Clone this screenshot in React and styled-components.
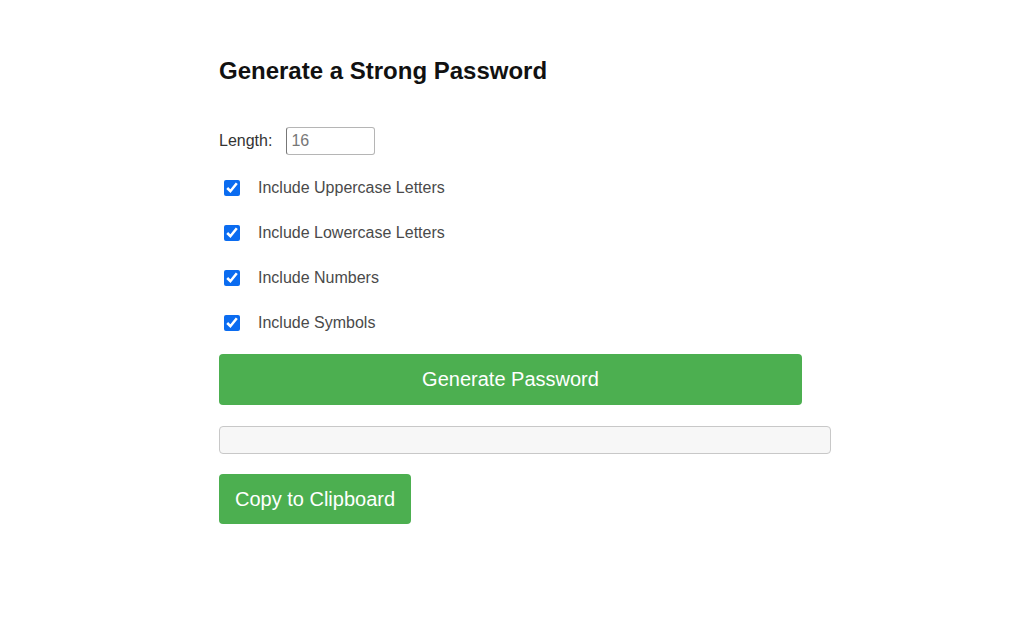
import React, { useState } from 'react';
import styled, { createGlobalStyle } from 'styled-components';

const GlobalStyle = createGlobalStyle`
  body {
    margin: 0;
    background: #fff;
    font-family: "Liberation Sans", Arial, sans-serif;
  }
`;

const Wrapper = styled.div`
  display: flex;
  flex-direction: column;
  align-items: flex-start;
  padding: 57px 0 0 219px;
`;

const Title = styled.h2`
  margin: 0 0 42px;
  font-size: 24px;
  line-height: 28px;
  font-weight: bold;
  color: #111;
`;

const LengthRow = styled.div`
  display: flex;
  align-items: center;
  gap: 14px;
  height: 28px;
  margin-bottom: 21px;
`;

const Label = styled.label`
  font-size: 16px;
  color: #333;
`;

const NumberInput = styled.input`
  box-sizing: border-box;
  width: 89px;
  height: 28px;
  padding: 0 4px;
  border: 1px solid #b5b5b5;
  border-left-color: #777;
  border-radius: 3px;
  font-family: inherit;
  font-size: 16px;
  color: #777;
`;

const OptionList = styled.div`
  display: flex;
  flex-direction: column;
  gap: 21px;
  margin-bottom: 19px;
`;

const Option = styled.label`
  display: flex;
  align-items: center;
  height: 24px;
  font-size: 16px;
  color: #4a4a4a;
`;

const Checkbox = styled.input`
  width: 16px;
  height: 16px;
  margin: 0 18px 0 5px;
  accent-color: #0b6cf0;
`;

const GreenButton = styled.button`
  box-sizing: border-box;
  width: ${p => p.$width || 'auto'};
  height: ${p => p.$height};
  padding: 0 ${p => p.$pad || 0}px;
  border: none;
  border-radius: 4px;
  background: #4caf50;
  color: #fff;
  font-family: inherit;
  font-size: 20px;
  cursor: pointer;

  &:hover {
    background: #45a049;
  }
`;

const Output = styled.input`
  box-sizing: border-box;
  width: 612px;
  height: 28px;
  margin: 21px 0 20px;
  border: 1px solid #c8c8c8;
  border-radius: 4px;
  background: #f7f7f7;
  font-family: inherit;
  font-size: 16px;
`;

const options = [
  'Include Uppercase Letters',
  'Include Lowercase Letters',
  'Include Numbers',
  'Include Symbols',
];

export default function App() {
  const [length, setLength] = useState(16);

  return (
    <Wrapper>
      <GlobalStyle />
      <Title>Generate a Strong Password</Title>
      <LengthRow>
        <Label htmlFor="len">Length:</Label>
        <NumberInput id="len" type="text" value={length} onChange={e => setLength(e.target.value)} />
      </LengthRow>
      <OptionList>
        {options.map(o => (
          <Option key={o}>
            <Checkbox type="checkbox" defaultChecked />
            {o}
          </Option>
        ))}
      </OptionList>
      <GreenButton $width="583px" $height="51px">Generate Password</GreenButton>
      <Output type="text" readOnly />
      <GreenButton $height="50px" $pad={16}>Copy to Clipboard</GreenButton>
    </Wrapper>
  );
}
